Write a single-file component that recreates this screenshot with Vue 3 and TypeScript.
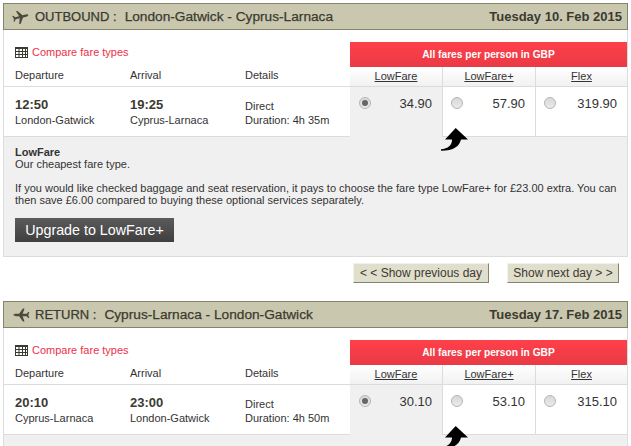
<script setup lang="ts">
interface Fare { name: string; price: string; selected: boolean }
interface Leg {
  kind: string; route: string; date: string; dep: string; arr: string;
  from: string; to: string; duration: string; fares: Fare[]; flip: boolean; showInfo: boolean;
}
const legs: Leg[] = [
  { kind: 'OUTBOUND', route: 'London-Gatwick - Cyprus-Larnaca', date: 'Tuesday 10. Feb 2015', dep: '12:50', arr: '19:25', from: 'London-Gatwick', to: 'Cyprus-Larnaca', duration: '4h 35m', flip: false, showInfo: true,
    fares: [{ name: 'LowFare', price: '34.90', selected: true }, { name: 'LowFare+', price: '57.90', selected: false }, { name: 'Flex', price: '319.90', selected: false }] },
  { kind: 'RETURN', route: 'Cyprus-Larnaca - London-Gatwick', date: 'Tuesday 17. Feb 2015', dep: '20:10', arr: '23:00', from: 'Cyprus-Larnaca', to: 'London-Gatwick', duration: '4h 50m', flip: true, showInfo: false,
    fares: [{ name: 'LowFare', price: '30.10', selected: true }, { name: 'LowFare+', price: '53.10', selected: false }, { name: 'Flex', price: '315.10', selected: false }] },
]
</script>

<template>
  <div class="page">
    <template v-for="leg in legs" :key="leg.kind">
      <section class="leg">
        <header class="head">
          <svg class="plane" :class="{ flip: leg.flip }" viewBox="0 0 18 14" width="17" height="14">
            <path d="M17.500 7C17.500 6 16 5.800 15 5.800H11.500L7.500 0H5.800L7.800 5.800H3.500L1.800 3.800H.7L1.800 7L.7 10.200H1.800L3.500 8.200H7.800L5.800 14H7.500L11.500 8.200H15C16 8.200 17.500 8 17.500 7Z" fill="#4b4a3c" />
          </svg>
          <span class="title"><span class="kind">{{ leg.kind }} :</span><span class="route">{{ leg.route }}</span></span>
          <span class="date">{{ leg.date }}</span>
        </header>
        <div class="body">
          <div class="left">
            <div class="compare">
              <svg viewBox="0 0 13 11" width="13" height="11" class="grid-icon">
                <path d="M0 0h13v11H0z" fill="#3b3a2e" />
                <path d="M1 2h2.500v2H1zM4.500 2H7v2H4.500zM8 2h2v2H8zM11 2h1v2h-1zM1 5h2.500v2H1zM4.500 5H7v2H4.500zM8 5h2v2H8zM11 5h1v2h-1zM1 8h2.500v2H1zM4.500 8H7v2H4.500zM8 8h2v2H8zM11 8h1v2h-1z" fill="#fff" />
              </svg>
              <a class="compare-link">Compare fare types</a>
            </div>
            <div class="cols labels">
              <span>Departure</span><span>Arrival</span><span>Details</span>
            </div>
            <div class="cols flight">
              <div><strong>{{ leg.dep }}</strong><span>{{ leg.from }}</span></div>
              <div><strong>{{ leg.arr }}</strong><span>{{ leg.to }}</span></div>
              <div class="details"><span>Direct</span><span>Duration: {{ leg.duration }}</span></div>
            </div>
          </div>
          <div class="right">
            <div class="banner">All fares per person in GBP</div>
            <div class="fares">
              <div v-for="fare in leg.fares" :key="fare.name" class="fare" :class="{ active: fare.selected }">
                <div class="fare-name"><a>{{ fare.name }}</a></div>
                <div class="fare-price">
                  <span class="radio" :class="{ on: fare.selected }"></span>
                  <span>{{ fare.price }}</span>
                </div>
              </div>
            </div>
            <svg class="arrow" viewBox="0 0 27 23" width="27" height="23">
              <path d="M14.700 0 L27 11.500 H20 C18.500 18 13 22.800 0 22.800 V21.300 C7 20.800 11.200 17 11 11.500 H4 Z" fill="#000" />
            </svg>
          </div>
        </div>
        <div class="info">
          <template v-if="leg.showInfo">
            <p class="name">LowFare</p>
            <p>Our cheapest fare type.</p>
            <p class="pitch">If you would like checked baggage and seat reservation, it pays to choose the fare type LowFare+ for £23.00 extra. You can then save £6.00 compared to buying these optional services separately.</p>
            <button class="upgrade" type="button">Upgrade to LowFare+</button>
          </template>
        </div>
      </section>
      <nav v-if="leg.showInfo" class="day-nav">
        <button class="prev" type="button">&lt; &lt; Show previous day</button>
        <button class="next" type="button">Show next day &gt; &gt;</button>
      </nav>
    </template>
  </div>
</template>

<style>
html, body { margin: 0; background: #fff; overflow: hidden; }
</style>

<style scoped>
.page {
  box-sizing: border-box;
  width: 631px;
  height: 446px;
  overflow: hidden;
  padding: 3px 3px 0;
  font-family: "Liberation Sans", Arial, sans-serif;
  font-size: 11px;
  color: #333;
}
.head {
  box-sizing: border-box;
  height: 27px;
  display: flex;
  align-items: center;
  background: #c9c8ae;
  border: 1px solid #85836a;
  padding: 0 5px 0 8px;
  color: #3c3a30;
  -webkit-text-stroke: 0.25px #3c3a30;
}
.plane { margin-right: 6px; transform: rotate(-14deg); }
.plane.flip { transform: translateX(1px) rotate(180deg); }
.title { flex: 1; font-size: 13px; }
.kind { margin-right: 8px; }
.route { font-size: 13.700px; }
.date { font-size: 13px; font-weight: bold; -webkit-text-stroke: 0; }
.body {
  position: relative;
  display: flex;
  border-left: 1px solid #dcdcdc;
  border-right: 1px solid #dcdcdc;
}
.left { width: 346px; }
.compare {
  height: 32px;
  display: flex;
  align-items: center;
  padding: 12px 0 0 11px;
  box-sizing: border-box;
  gap: 4px;
}
.grid-icon { flex: none; }
.compare-link { color: #ee2f4a; font-size: 11px; }
.cols { display: grid; grid-template-columns: 115px 115px 1fr; padding-left: 11px; }
.labels {
  height: 25px;
  align-items: center;
  box-sizing: border-box;
  padding-top: 2px;
  border-bottom: 1px solid #dcdcdc;
  font-size: 11px;
}
.flight {
  box-sizing: border-box;
  height: 50px;
  padding-top: 9px;
  line-height: 14px;
  border-bottom: 1px solid #dcdcdc;
}
.flight > div { display: flex; flex-direction: column; }
.flight strong { font-size: 13px; line-height: 17px; color: #3c3a30; }
.details { padding-top: 3px; }
.right { position: relative; width: 277px; }
.banner {
  margin-top: 12px;
  height: 25px;
  display: flex;
  align-items: center;
  justify-content: center;
  color: #fff;
  font-weight: bold;
  font-size: 10.200px;
  background: linear-gradient(#ff4049, #e93a46);
}
.fares { display: grid; grid-template-columns: 92px 93px 92px; }
.fare { display: flex; flex-direction: column; border-left: 1px solid #dcdcdc; border-bottom: 1px solid #dcdcdc; }
.fare:first-child { border-left: 0; }
.fare.active { background: #f0f0f0; border-bottom-color: transparent; }
.fare-name {
  height: 17px;
  padding-bottom: 2px;
  display: flex;
  align-items: center;
  justify-content: center;
  background: linear-gradient(#fff, #f1f1f1);
  border-bottom: 1px solid #dcdcdc;
}
.fare-name a { text-decoration: underline; color: #333; }
.fare-price {
  box-sizing: border-box;
  height: 49px;
  display: flex;
  justify-content: space-between;
  padding: 9px 10px 0 8px;
  font-size: 13px;
  line-height: 16px;
}
.fare.active .fare-price { padding-left: 9px; }
.radio {
  box-sizing: border-box;
  width: 12px;
  height: 12px;
  margin-top: 1px;
  border-radius: 50%;
  border: 1px solid #b5b5b5;
  background: linear-gradient(#d8d8d8, #eaeaea);
  position: relative;
}
.radio.on::after {
  content: "";
  position: absolute;
  inset: 2px;
  border-radius: 50%;
  background: #666;
}
.arrow { position: absolute; left: 91px; top: 98px; z-index: 2; }
.info {
  box-sizing: border-box;
  height: 120px;
  padding: 9px 5px 0 11px;
  background: #f0f0f0;
  border: 1px solid #dcdcdc;
  border-top: 0;
  line-height: 12px;
  font-size: 11px;
}
.info p { margin: 0; }
.name { font-weight: bold; }
.pitch { margin-top: 12px !important; }
.upgrade {
  margin-top: 12px;
  height: 24px;
  width: 159px;
  border: 0;
  background: linear-gradient(#5b5b5b, #3f3f3f);
  color: #fff;
  font-family: inherit;
  font-size: 14.300px;
  padding: 0;
  display: block;
}
.day-nav { display: flex; justify-content: flex-end; gap: 18px; height: 44px; padding: 6px 9px 0 0; box-sizing: border-box; }
.day-nav button {
  height: 20px;
  padding: 0;
  font-family: inherit;
  font-size: 12px;
  color: #3c3a30;
  background: #e0decc;
  border: 1px solid;
  border-color: #f3f2e8 #85836a #85836a #f3f2e8;
}
.day-nav .prev { width: 136px; }
.day-nav .next { width: 112px; }
</style>
